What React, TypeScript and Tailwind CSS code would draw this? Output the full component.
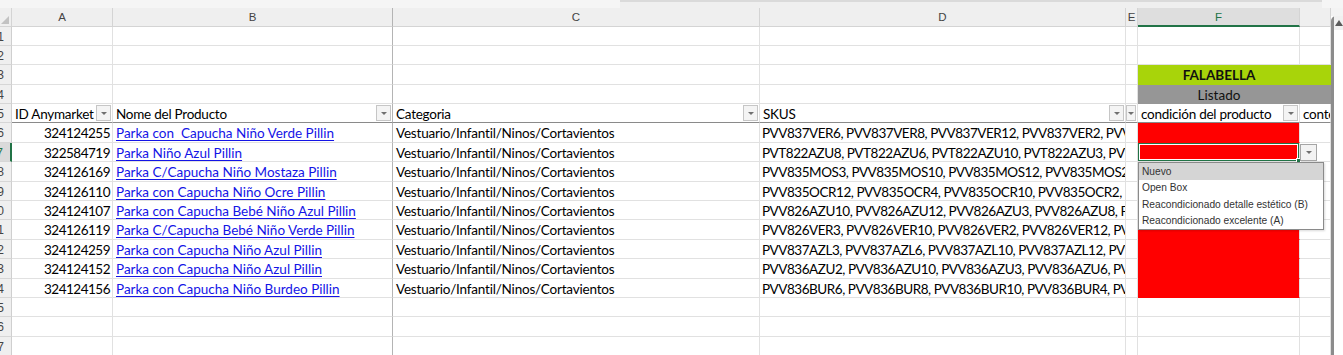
import clsx from 'clsx';

type Item = { id: string; name: string; sku: string };

// rows 6–14 of the sheet
const items: Item[] = [
  { id: '324124255', name: 'Parka con  Capucha Niño Verde Pillin', sku: 'PVV837VER6, PVV837VER8, PVV837VER12, PVV837VER2, PVV837VER10, PVV837VER4' },
  { id: '322584719', name: 'Parka Niño Azul Pillin', sku: 'PVT822AZU8, PVT822AZU6, PVT822AZU10, PVT822AZU3, PVT822AZU12, PVT822AZU4' },
  { id: '324126169', name: 'Parka C/Capucha Niño Mostaza Pillin', sku: 'PVV835MOS3, PVV835MOS10, PVV835MOS12, PVV835MOS2, PVV835MOS4' },
  { id: '324126110', name: 'Parka con Capucha Niño Ocre Pillin', sku: 'PVV835OCR12, PVV835OCR4, PVV835OCR10, PVV835OCR2, PVV835OCR3' },
  { id: '324124107', name: 'Parka con Capucha Bebé Niño Azul Pillin', sku: 'PVV826AZU10, PVV826AZU12, PVV826AZU3, PVV826AZU8, PVV826AZU6' },
  { id: '324126119', name: 'Parka C/Capucha Bebé Niño Verde Pillin', sku: 'PVV826VER3, PVV826VER10, PVV826VER2, PVV826VER12, PVV826VER8' },
  { id: '324124259', name: 'Parka con Capucha Niño Azul Pillin', sku: 'PVV837AZL3, PVV837AZL6, PVV837AZL10, PVV837AZL12, PVV837AZL8' },
  { id: '324124152', name: 'Parka con Capucha Niño Azul Pillin', sku: 'PVV836AZU2, PVV836AZU10, PVV836AZU3, PVV836AZU6, PVV836AZU8' },
  { id: '324124156', name: 'Parka con Capucha Niño Burdeo Pillin', sku: 'PVV836BUR6, PVV836BUR8, PVV836BUR10, PVV836BUR4, PVV836BUR2' },
];

const options = ['Nuevo', 'Open Box', 'Reacondicionado detalle estético (B)', 'Reacondicionado excelente (A)'];

// heights of rows 1..17
const rowH = [
  'h-[19px]', 'h-[19px]', 'h-[20px]', 'h-[19px]', 'h-[19px]', 'h-[20px]', 'h-[19px]', 'h-[20px]', 'h-[19px]',
  'h-[19px]', 'h-[20px]', 'h-[19px]', 'h-[20px]', 'h-[19px]', 'h-[19px]', 'h-[20px]', 'h-[19px]',
];

const gridCols = 'grid grid-cols-[12px_101px_280px_367px_366px_12px_162px_31px]';
const cell = 'flex items-center overflow-hidden whitespace-nowrap border-b border-r border-[#e1e1e1] pt-[2px]';
const splitB = 'border-r-[#b4b4b4]';

function Arrow() {
  return <span className="block h-0 w-0 border-x-[3px] border-t-[3px] border-x-transparent border-t-[#707070]" />;
}

function FilterBtn({ narrow }: { narrow?: boolean }) {
  return (
    <span
      className={clsx(
        'ml-auto mr-[1px] -mt-[2px] flex h-[16px] shrink-0 items-center justify-center border border-[#c6c6c6] bg-[#f4f4f4]',
        narrow ? 'w-[10px]' : 'w-[15px]',
      )}
    >
      <Arrow />
    </span>
  );
}

function RowHead({ n, active }: { n: number; active?: boolean }) {
  return (
    <div
      className={clsx(
        "flex items-center justify-end overflow-hidden border-b border-[#d6d6d6] pr-[7px] pt-[1px] font-['Liberation_Sans',sans-serif] text-[12px]",
        active
          ? 'border-r-2 border-r-[#217346] bg-[#dadada] text-[#217346]'
          : 'border-r border-r-[#cfcfcf] bg-[#efefef] text-[#444]',
      )}
    >
      {n}
    </div>
  );
}

function ColHead({ label, active, className }: { label?: string; active?: boolean; className?: string }) {
  return (
    <div
      className={clsx(
        "flex items-center justify-center overflow-hidden border-r pt-[2px] font-['Liberation_Sans',sans-serif] text-[11.5px]",
        active
          ? 'border-b-2 border-b-[#217346] border-r-[#d4d4d4] bg-[#dedede] text-[#217346]'
          : 'border-b border-[#d4d4d4] bg-[#efefef] text-[#444]',
        className,
      )}
    >
      {label}
    </div>
  );
}

function EmptyRow({ n }: { n: number }) {
  return (
    <div className={clsx(gridCols, rowH[n - 1])}>
      <RowHead n={n} />
      <div className={cell} />
      <div className={clsx(cell, splitB)} />
      <div className={cell} />
      <div className={cell} />
      <div className={cell} />
      <div className={cell} />
      <div className={cell} />
    </div>
  );
}

function BannerRow({ n, label, bold, fill }: { n: number; label: string; bold?: boolean; fill: string }) {
  return (
    <div className={clsx(gridCols, rowH[n - 1])}>
      <RowHead n={n} />
      <div className={cell} />
      <div className={clsx(cell, splitB)} />
      <div className={cell} />
      <div className={cell} />
      <div className={cell} />
      <div className={clsx('col-span-2 flex items-center overflow-hidden pt-[1px]', fill)}>
        <span className={clsx('w-[162px] text-center text-[#111]', bold && 'font-bold')}>{label}</span>
      </div>
    </div>
  );
}

function HeaderRow() {
  const hd = clsx(cell, 'border-b-[#8a8a8a] pl-[3px] tracking-[-0.25px]');
  return (
    <div className={clsx(gridCols, rowH[4])}>
      <RowHead n={5} />
      <div className={hd}>
        ID Anymarket
        <FilterBtn />
      </div>
      <div className={clsx(hd, splitB)}>
        Nome del Producto
        <FilterBtn />
      </div>
      <div className={hd}>
        Categoria
        <FilterBtn />
      </div>
      <div className={hd}>
        SKUS
        <FilterBtn />
      </div>
      <div className={clsx(cell, 'border-b-[#8a8a8a]')}>
        <FilterBtn narrow />
      </div>
      <div className={hd}>
        condición del producto
        <FilterBtn />
      </div>
      <div className={hd}>contenido</div>
    </div>
  );
}

function ItemRow({ item, n, selected }: { item: Item; n: number; selected?: boolean }) {
  return (
    <div className={clsx(gridCols, rowH[n - 1])}>
      <RowHead n={n} active={selected} />
      <div className={clsx(cell, 'justify-end pr-[2px] tracking-[-0.5px]')}>{item.id}</div>
      <div className={clsx(cell, splitB, 'pl-[3px]')}>
        <span className="whitespace-pre text-[#1414e6] underline decoration-1 underline-offset-[2px]">{item.name}</span>
      </div>
      <div className={clsx(cell, 'pl-[3px] tracking-[-0.2px]')}>Vestuario/Infantil/Ninos/Cortavientos</div>
      <div className={clsx(cell, 'pl-[2px] tracking-[-0.45px]')}>{item.sku}</div>
      <div className={cell} />
      {selected ? (
        <div className="relative border-b border-r border-[#e1e1e1]">
          <div className="h-full w-full border border-[#217346]">
            <div className="h-full w-full border border-white bg-[#ff0000]" />
          </div>
          <span className="absolute -bottom-[2px] -right-[2px] h-[5px] w-[5px] border border-white bg-[#217346]" />
        </div>
      ) : (
        <div className={clsx(cell, 'border-b-[#ff0000] bg-[#ff0000]')} />
      )}
      <div className={cell} />
    </div>
  );
}

function ValidationList() {
  return (
    <>
      <span className="absolute left-[1300px] top-[136px] flex h-[17px] w-[17px] items-center justify-center border border-[#a5a5a5] bg-[#f3f3f3]">
        <Arrow />
      </span>
      <div className="absolute left-[1138px] top-[154px] w-[186px] border border-[#8a8a8a] bg-white font-['Liberation_Sans',sans-serif] text-[10.2px] text-[#333] shadow-[1px_1px_2px_rgba(0,0,0,0.15)]">
        {options.map((opt, i) => (
          <div key={opt} className={clsx('flex h-[16.6px] items-center pl-[3px]', i === 0 && 'bg-[#d5d5d5]')}>
            {opt}
          </div>
        ))}
      </div>
    </>
  );
}

function ScrollStrip() {
  return (
    <div className="flex w-[12px] flex-col bg-white">
      <div className="h-[8px] bg-[#f3f3f3]" />
      <div className="flex flex-1 flex-col rounded-tl-[5px] border-l-[3px] border-[#8c8c8c] bg-white">
        <div className="flex h-[14px] items-center justify-center bg-[#f0f0f0]">
          <span className="block h-0 w-0 border-x-[4px] border-b-[6px] border-x-transparent border-b-[#5a5a5a]" />
        </div>
      </div>
    </div>
  );
}

export default function App() {
  return (
    <div className="flex h-[355px] w-[1343px] flex-col overflow-hidden bg-white font-['Lato',sans-serif] text-[13.5px] text-black">
      <div className="flex h-[8px] shrink-0 bg-[#f5f5f5]">
        <div className="w-[620px]" />
        <div className="mr-[21px] flex-1 border-t-2 border-[#dadada] bg-[#efefef]" />
      </div>
      <div className="flex min-h-0 flex-1">
        <div className="relative flex w-[1331px] flex-col overflow-hidden">
          <div className={clsx(gridCols, 'h-[19px] shrink-0')}>
            <div className="relative border-b border-r border-[#d4d4d4] bg-[#efefef]">
              <span className="absolute bottom-[2px] right-[2px] h-0 w-0 border-b-[8px] border-l-[8px] border-b-[#c2c2c2] border-l-transparent" />
            </div>
            <ColHead label="A" />
            <ColHead label="B" className="border-r-[#b4b4b4]" />
            <ColHead label="C" />
            <ColHead label="D" />
            <ColHead label="E" />
            <ColHead label="F" active />
            <ColHead />
          </div>
          <EmptyRow n={1} />
          <EmptyRow n={2} />
          <BannerRow n={3} label="FALABELLA" bold fill="bg-[#a8d40a]" />
          <BannerRow n={4} label="Listado" fill="bg-[#969696]" />
          <HeaderRow />
          {items.map((it, i) => (
            <ItemRow key={i} item={it} n={i + 6} selected={i === 1} />
          ))}
          <EmptyRow n={15} />
          <EmptyRow n={16} />
          <EmptyRow n={17} />
          <ValidationList />
        </div>
        <ScrollStrip />
      </div>
    </div>
  );
}
